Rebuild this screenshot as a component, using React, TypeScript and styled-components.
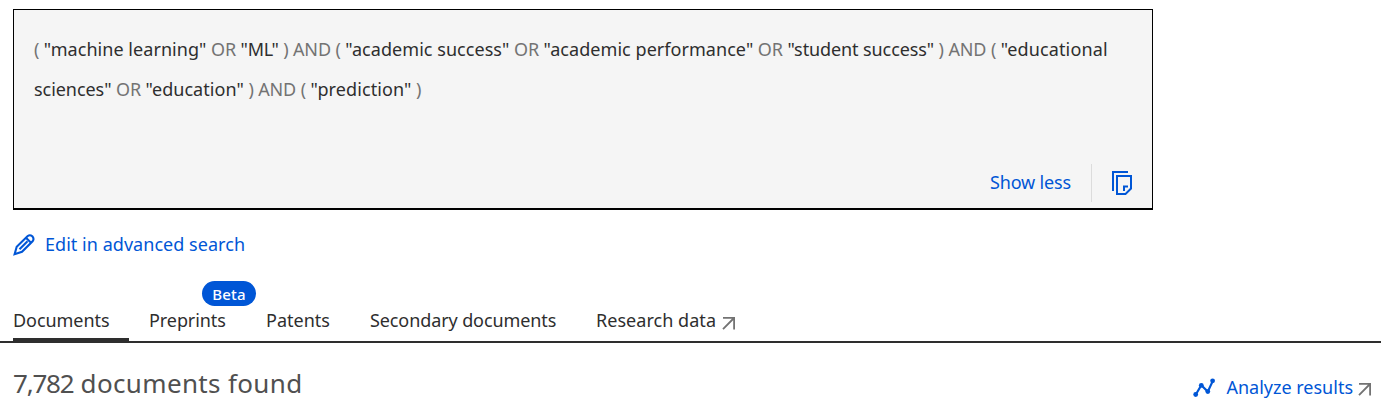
import React from "react";
import styled, { createGlobalStyle } from "styled-components";

const GlobalStyle = createGlobalStyle`
  * { box-sizing: border-box; }
  body {
    margin: 0;
    background: #fff;
    color: #2e2e2e;
    font-family: "Noto Sans", "Open Sans", sans-serif;
    font-size: 18px;
    overflow: hidden;
  }
`;

const Page = styled.main`
  width: 1381px;
  height: 415px;
  padding-top: 9px;
`;

const QueryBox = styled.section`
  display: flex;
  flex-direction: column;
  justify-content: space-between;
  width: 1140px;
  height: 201px;
  margin-left: 13px;
  padding: 19px 20px 6px;
  border: 1px solid #000;
  border-bottom-width: 2px;
  background: #f5f5f5;
`;

const Query = styled.p`
  margin: 0;
  line-height: 40px;
  white-space: nowrap;
`;

const Term = styled.span<{ $spacing?: number }>`
  color: #2e2e2e;
  letter-spacing: ${(p) => p.$spacing ?? 0.05}px;
`;

const Operator = styled.span`
  color: #737373;
  letter-spacing: -0.13px;
`;

const QueryActions = styled.div`
  display: flex;
  justify-content: flex-end;
  align-items: center;
  height: 39px;
`;

const Link = styled.a<{ $spacing?: number }>`
  padding-bottom: 2px;
  color: #0056d6;
  line-height: 22px;
  white-space: nowrap;
  letter-spacing: ${(p) => p.$spacing ?? 0}px;
`;

const Divider = styled.span`
  width: 1px;
  height: 38px;
  margin: 0 20px;
  background: #dcdcdc;
`;

const Icon = styled.svg`
  display: block;
  flex: none;
`;

const EditRow = styled.div`
  display: flex;
  align-items: center;
  gap: 10px;
  height: 24px;
  margin: 23px 0 0 13px;
`;

const Tabs = styled.nav`
  display: flex;
  align-items: flex-end;
  gap: 20px;
  height: 86px;
  padding-left: 13px;
  border-bottom: 2px solid #2e2e2e;
`;

const Tab = styled.a<{ $active?: boolean; $width: number; $spacing?: number }>`
  position: relative;
  display: flex;
  gap: 6px;
  width: ${(p) => p.$width}px;
  height: 32px;
  line-height: 22px;
  white-space: nowrap;
  letter-spacing: ${(p) => p.$spacing ?? 0}px;
  border-bottom: 3px solid ${(p) => (p.$active ? "#2e2e2e" : "transparent")};

  svg {
    margin-top: 1px;
  }
`;

const Badge = styled.span`
  position: absolute;
  top: -28px;
  left: 53px;
  width: 54px;
  height: 25px;
  border-radius: 13px;
  background: #0056d6;
  color: #fff;
  font-size: 15px;
  font-weight: 500;
  line-height: 27px;
  letter-spacing: 0.2px;
  text-align: center;
`;

const Results = styled.header`
  display: flex;
  justify-content: space-between;
  padding: 22px 10px 0 13px;
`;

const Heading = styled.h2`
  margin: 0;
  color: #505050;
  font-size: 26px;
  font-weight: 400;
  line-height: 36px;
  letter-spacing: 0.35px;
`;

const Count = styled.span`
  letter-spacing: -1.2px;
`;

const Analyze = styled.div`
  display: flex;
  align-items: center;
  height: 24px;
  margin-top: 11px;
`;

const Gap = styled.span<{ $w: number }>`
  width: ${(p) => p.$w}px;
`;

const ExternalArrow = () => (
  <Icon width="13" height="24" viewBox="0 0 13 24" fill="none" stroke="#737373" strokeWidth="1.8">
    <path d="M1 7.9H12.1V19.5M12 8L1 19.2" />
  </Icon>
);

const CopyIcon = () => (
  <Icon width="20" height="24" viewBox="0 0 20 24" fill="none" stroke="#0056d6" strokeWidth="2">
    <path d="M16 1H1V20M5 5H19V17.5L13.5 23H5ZM12 20V15.5H16" />
  </Icon>
);

const PencilIcon = () => (
  <Icon width="22" height="22" viewBox="0 0 22 22" fill="none" stroke="#0056d6" strokeWidth="2.1">
    <path d="M1.6 20.2L3.7 12.8L14.7 2Q17 .3 19.3 2.3Q21.4 4.6 19.8 7L9 17.8ZM13 3.7L18.2 8.9M6.5 15.2L14.5 7.2" />
  </Icon>
);

const GraphIcon = () => (
  <Icon width="22" height="20" viewBox="0 0 22 20" fill="#0056d6">
    <path d="M2.8 16.5L8.3 7.3L14.8 13.6L19.7 3.1" fill="none" stroke="#0056d6" strokeWidth="2.2" />
    <circle cx="2.7" cy="16.5" r="2.4" />
    <circle cx="8.3" cy="7.3" r="2.4" />
    <circle cx="14.8" cy="13.6" r="2.4" />
    <circle cx="19.6" cy="2.8" r="2.4" />
  </Icon>
);

export default function App() {
  return (
    <>
      <GlobalStyle />
      <Page>
        <QueryBox>
          <Query>
            <Operator>( </Operator><Term>"machine learning"</Term><Operator> OR </Operator>
            <Term $spacing={-0.25}>"ML"</Term><Operator> ) AND ( </Operator><Term>"academic success"</Term>
            <Operator> OR </Operator><Term>"academic performance"</Term><Operator> OR </Operator>
            <Term $spacing={-0.1}>"student success"</Term><Operator> ) AND ( </Operator>
            <Term $spacing={0.15}>"educational</Term>
            <br />
            <Term $spacing={-0.05}>sciences"</Term><Operator> OR </Operator><Term>"education"</Term>
            <Operator> ) AND ( </Operator><Term $spacing={0.1}>"prediction"</Term><Operator> )</Operator>
          </Query>
          <QueryActions>
            <Link $spacing={-0.15}>Show less</Link>
            <Divider />
            <CopyIcon />
          </QueryActions>
        </QueryBox>
        <EditRow>
          <PencilIcon />
          <Link $spacing={0.04}>Edit in advanced search</Link>
        </EditRow>
        <Tabs>
          <Tab $active $width={116} $spacing={-0.05}>Documents</Tab>
          <Tab $width={97} $spacing={-0.08}>Preprints<Badge>Beta</Badge></Tab>
          <Tab $width={84}>Patents</Tab>
          <Tab $width={206} $spacing={-0.1}>Secondary documents</Tab>
          <Tab $width={140} $spacing={0.04}>Research data<ExternalArrow /></Tab>
        </Tabs>
        <Results>
          <Heading><Count>7,782</Count> documents found</Heading>
          <Analyze>
            <GraphIcon />
            <Gap $w={11} />
            <Link>Analyze results</Link>
            <Gap $w={5} />
            <ExternalArrow />
          </Analyze>
        </Results>
      </Page>
    </>
  );
}
